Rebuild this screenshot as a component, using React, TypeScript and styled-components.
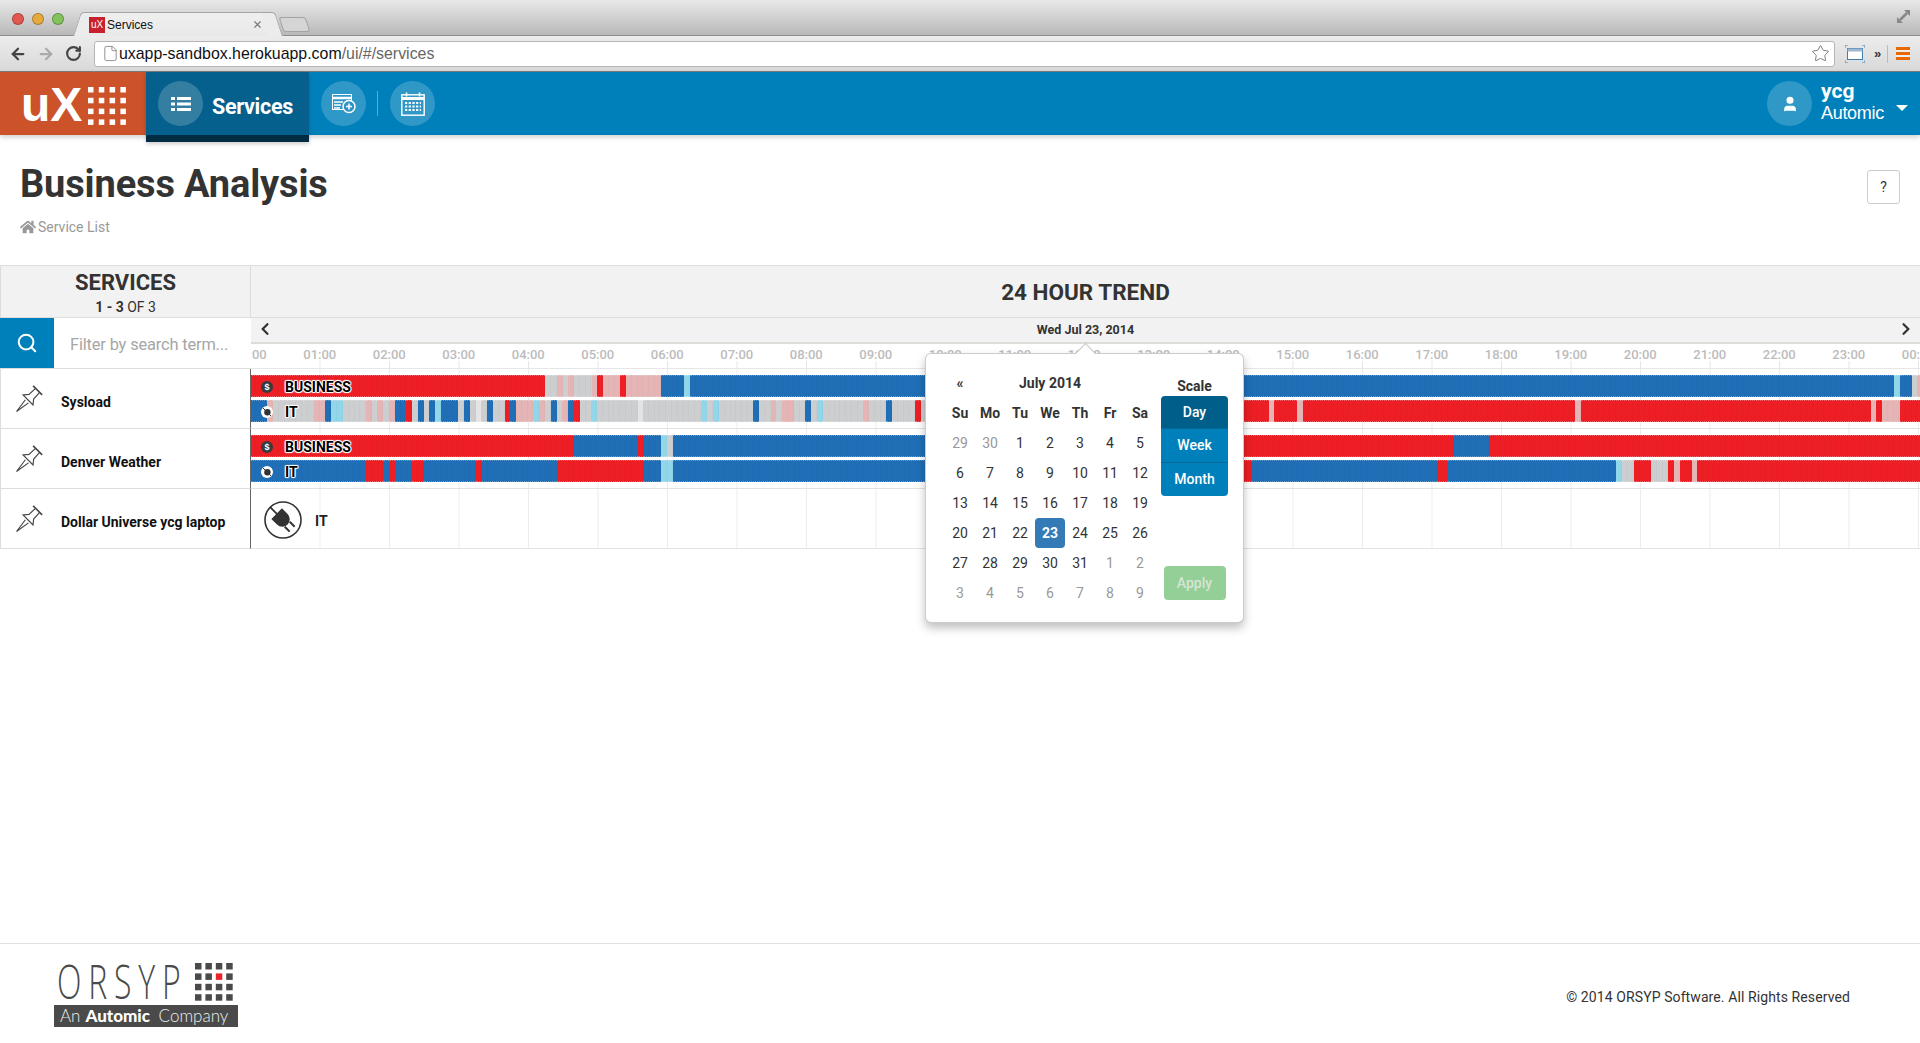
import React from 'react';
import styled, { createGlobalStyle } from 'styled-components';
import { ArrowLeft, ArrowRight, RotateCw, File as FileIcon, Star, Search, X, User } from 'lucide-react';
import { FaChevronLeft, FaChevronRight, FaHome } from 'react-icons/fa';

const Global = createGlobalStyle`
  html, body { margin: 0; padding: 0; height: 100%; overflow: hidden; background: #fff; }
  body { font-family: Roboto, "Liberation Sans", sans-serif; color: #333; }
  * { box-sizing: border-box; }
`;

const Page = styled.div`
  height: 1043px;
  display: flex;
  flex-direction: column;
  overflow: hidden;
`;

/* ---------- browser chrome ---------- */
const TitleBar = styled.div`
  height: 36px;
  flex: none;
  display: flex;
  align-items: flex-end;
  padding-left: 12px;
  background: linear-gradient(#e8e8e8, #b9b9b9);
  border-bottom: 1px solid #8e8e8e;
`;
const Lights = styled.div`
  display: flex;
  gap: 8px;
  align-self: flex-start;
  margin-top: 13px;
  margin-right: 12px;
`;
const Light = styled.span<{ $c: string }>`
  width: 12px;
  height: 12px;
  border-radius: 50%;
  background: ${p => p.$c};
  border: 1px solid rgba(0, 0, 0, 0.25);
`;
const Tab = styled.div`
  position: relative;
  width: 188px;
  height: 24px;
  margin-bottom: -1px;
  margin-left: 8px;
  padding: 0 9px 0 5px;
  display: flex;
  align-items: center;
  background: linear-gradient(#efefef, #e9e9e9);
  border-top: 1px solid #a5a5a5;
  font: 12px "Liberation Sans", sans-serif;
  color: #111;
  &::before, &::after {
    content: '';
    position: absolute;
    top: -1px;
    bottom: 0;
    width: 14px;
    background: #ececec;
    border-top: 1px solid #a5a5a5;
  }
  &::before { left: -7px; transform: skewX(-18deg); border-left: 1px solid #a5a5a5; border-top-left-radius: 4px; }
  &::after { right: -7px; transform: skewX(18deg); border-right: 1px solid #a5a5a5; border-top-right-radius: 4px; }
`;
const Favicon = styled.span`
  position: relative;
  z-index: 1;
  width: 16px;
  height: 16px;
  margin-right: 2px;
  background: #c8202d;
  color: #fff;
  font: 10px/16px "Liberation Sans", sans-serif;
  text-align: center;
`;
const TabTitle = styled.span`
  flex: 1;
  position: relative;
  z-index: 1;
`;
const TabClose = styled.span`
  position: relative;
  z-index: 1;
  display: flex;
  color: #777;
`;
const NewTab = styled.div`
  width: 27px;
  height: 15px;
  margin: 0 0 3px 9px;
  background: #d5d5d5;
  border: 1px solid #a3a3a3;
  border-radius: 3px;
  transform: skewX(18deg);
`;
const Expand = styled.svg`
  margin-left: auto;
  margin-right: 9px;
  align-self: flex-start;
  margin-top: 9px;
`;
const Toolbar = styled.div`
  height: 36px;
  flex: none;
  display: flex;
  align-items: center;
  padding-left: 9px;
  background: linear-gradient(#ececec, #d9d9d9);
  border-bottom: 1px solid #7d7d7d;
`;
const ToolIcon = styled.span<{ $c: string; $w: number }>`
  display: flex;
  width: ${p => p.$w}px;
  color: ${p => p.$c};
`;
const UrlBar = styled.div`
  width: 1741px;
  height: 26px;
  margin-left: 3px;
  padding: 0 4px 0 7px;
  display: flex;
  align-items: center;
  background: #fff;
  border: 1px solid #b5b5b5;
  border-radius: 3px;
  font: 15.9px "Liberation Sans", sans-serif;
  color: #111;
`;
const UrlPath = styled.span`
  color: #666;
`;
const UrlText = styled.span`
  margin-left: 0;
  flex: 1;
`;
const ToolRight = styled.div`
  display: flex;
  align-items: center;
  margin-left: 10px;
`;
const More = styled.span`
  margin-left: 9px;
  font: bold 13px "Liberation Sans", sans-serif;
  color: #333;
  border-right: 1px solid #bbb;
  line-height: 18px;
  padding-right: 6px;
`;
const Burger = styled.span`
  margin-left: 8px;
  width: 14px;
  height: 13px;
  background: repeating-linear-gradient(#e66a00 0 3px, #eee 3px 5px);
`;

/* ---------- app nav ---------- */
const Nav = styled.header`
  height: 63px;
  flex: none;
  display: flex;
  align-items: flex-start;
  background: #0080bb;
  box-shadow: 0 2px 5px rgba(0, 0, 0, 0.2);
  position: relative;
  z-index: 2;
`;
const Logo = styled.div`
  width: 146px;
  height: 63px;
  padding: 8px 0 0 21px;
  display: flex;
  gap: 6px;
  background: #cc5229;
  color: #fff;
  font: bold 48px/50px "Liberation Sans", sans-serif;
`;
const LogoDots = styled.span`
  margin-top: 7px;
  display: block;
`;
const ActiveTab = styled.div`
  width: 163px;
  height: 70px;
  padding: 9px 0 0 12px;
  display: flex;
  gap: 9px;
  background: #05608d;
  border-bottom: 7px solid #022c42;
  box-shadow: 0 2px 4px rgba(0, 0, 0, 0.2);
  color: #fff;
  font-size: 21.5px;
`;
const ActiveLabel = styled.span`
  line-height: 51px;
  font-weight: 700;
  letter-spacing: -0.3px;
`;
const Disc = styled.span`
  width: 45px;
  height: 45px;
  flex: none;
  display: flex;
  align-items: center;
  justify-content: center;
  border-radius: 50%;
  background: rgba(255, 255, 255, 0.19);
  color: #fff;
`;
const NavIcons = styled.div`
  display: flex;
  align-items: center;
  height: 45px;
  margin: 9px 0 0 12px;
`;
const NavDivider = styled.span`
  width: 1px;
  height: 25px;
  margin: 0 12px 0 11px;
  background: rgba(255, 255, 255, 0.35);
`;
const NavUser = styled.div`
  margin-left: auto;
  margin-top: 9px;
  display: flex;
  color: #fff;
`;
const UserText = styled.div`
  margin-left: 9px;
  width: 75px;
`;
const UserName = styled.div`
  font: 700 21px/24px Roboto, sans-serif;
  margin-top: -2px;
`;
const UserOrg = styled.div`
  font: 400 18px/20px "Liberation Sans", sans-serif;
  letter-spacing: -0.3px;
`;
const Caret = styled.span`
  width: 0;
  height: 0;
  margin: 24px 12px 0 0;
  border-style: solid;
  border-width: 6px 6px 0;
  border-color: #fff transparent transparent;
`;

/* ---------- page header ---------- */
const PageHead = styled.section`
  height: 130px;
  flex: none;
  padding: 25px 20px 0;
  display: flex;
  justify-content: space-between;
  align-items: flex-start;
`;
const Title = styled.h1`
  margin: 0;
  font: 700 38px/48px Roboto, sans-serif;
  color: #333;
  letter-spacing: -0.15px;
`;
const Crumb = styled.div`
  margin-top: 10px;
  display: flex;
  align-items: center;
  gap: 2px;
  font-size: 14px;
  line-height: 18px;
  color: #999;
`;
const HelpBtn = styled.button`
  width: 33px;
  height: 34px;
  margin-top: 10px;
  background: #fff;
  border: 1px solid #ccc;
  border-radius: 3px;
  font: 14px Roboto, sans-serif;
  color: #333;
  padding: 0;
`;

/* ---------- table ---------- */
const Table = styled.section`
  display: flex;
  flex: none;
  border-top: 1px solid #ddd;
`;
const Side = styled.div`
  width: 251px;
  flex: none;
`;
const SideHead = styled.div`
  height: 52px;
  padding-top: 4px;
  text-align: center;
  background: #f2f2f2;
  border-left: 1px solid #ddd;
  border-right: 1px solid #ddd;
  border-bottom: 1px solid #ddd;
`;
const SideTitle = styled.div`
  font: 700 22px/26px Roboto, sans-serif;
  color: #333;
`;
const SideCount = styled.div`
  font: 400 14px/18px Roboto, sans-serif;
  color: #333;
  margin-top: 2px;
  b { font-weight: 700; }
`;
const SearchRow = styled.div`
  height: 51px;
  display: flex;
  border-bottom: 1px solid #ddd;
`;
const SearchBtn = styled.span`
  width: 54px;
  display: flex;
  align-items: center;
  justify-content: center;
  background: #0080bb;
  color: #fff;
`;
const SearchInput = styled.div`
  flex: 1;
  padding-left: 16px;
  font-size: 16.4px;
  line-height: 54px;
  color: #a6a6a6;
  letter-spacing: -0.15px;
`;
const SvcRow = styled.div`
  height: 60px;
  padding-left: 15px;
  display: flex;
  align-items: center;
  gap: 18px;
  border-left: 1px solid #ddd;
  border-right: 1px solid #666;
  border-bottom: 1px solid #ddd;
  font: 700 14px Roboto, sans-serif;
  color: #111;
`;
const SvcName = styled.span`
  margin-top: 6px;
`;
const PinIcon = styled.svg`
  flex: none;
`;
const Main = styled.div`
  position: relative;
  width: 1669px;
  flex: none;
`;
const TrendClip = styled.div`
  overflow: hidden;
`;
const TrendTitle = styled.div`
  height: 52px;
  background: #f2f2f2;
  border-bottom: 1px solid #ddd;
  text-align: center;
  font: 700 22.5px/53px Roboto, sans-serif;
  color: #333;
`;
const DateNav = styled.div`
  height: 26px;
  padding: 0 7px;
  display: flex;
  align-items: center;
  justify-content: space-between;
  background: #f2f2f2;
  border-bottom: 2px solid #dcdcd8;
  font: 700 12.5px/24px Roboto, sans-serif;
  color: #333;
  svg { display: block; color: #333; margin-top: -2px; }
`;
const Axis = styled.div`
  height: 25px;
  display: flex;
  padding-top: 2px;
  border-bottom: 1px solid #e6e6e6;
  background-image: linear-gradient(90deg, #e6e6e6 1px, transparent 1px);
  background-size: 69.5px 7px;
  background-position: -1px 100%;
  background-repeat: repeat-x;
  overflow: hidden;
`;
const Hour = styled.span`
  width: 69.5px;
  flex: none;
  text-align: center;
  font: 500 13px/18px Roboto, sans-serif;
  color: #bcbcbc;
  &:first-child { margin-left: -35.5px; }
`;
const Lane = styled.div`
  height: 60px;
  padding-top: 6px;
  border-bottom: 1px solid #e2e2e2;
  background-image: linear-gradient(90deg, #ececec 1px, transparent 1px);
  background-size: 69.5px 100%;
  background-position: -1px 0;
`;
const Bar = styled.div`
  position: relative;
  width: 1680px;
  height: 22px;
  margin: 0 0 3px -1px;
  display: flex;
`;
const toneColor: Record<string, string> = {
  r: '#ed1f24',
  b: '#206fb6',
  g: '#cdced0',
  p: '#e5b5b5',
  l: '#92d6ea',
  w: '#e4e4e4',
};
const Segment = styled.span<{ $tone: string }>`
  flex: none;
  height: 100%;
  background-color: ${p => toneColor[p.$tone]};
  background-image: repeating-linear-gradient(90deg, transparent 0 4.8px, rgba(0, 0, 0, 0.025) 4.8px 5.79px);
  border-top: 1px dotted rgba(255, 255, 255, 0.3);
  border-bottom: 1px dotted rgba(255, 255, 255, 0.3);
`;
const BarTag = styled.span`
  position: absolute;
  left: 11px;
  top: 1px;
  height: 22px;
  display: flex;
  align-items: center;
  gap: 12px;
  font: 700 14px Roboto, sans-serif;
  color: #000;
  text-shadow: 1px 0 0 #fff, -1px 0 0 #fff, 0 1px 0 #fff, 0 -1px 0 #fff, 1px 1px 1px rgba(255,255,255,.7), -1px -1px 1px rgba(255,255,255,.7), 1px -1px 1px rgba(255,255,255,.7), -1px 1px 1px rgba(255,255,255,.7);
`;
const TagCoin = styled.span`
  width: 12px;
  height: 12px;
  flex: none;
  margin-top: -1px;
  border-radius: 50%;
  background: #3a3a3a;
  color: #fff;
  font: 700 9px/12px "Liberation Sans", sans-serif;
  text-align: center;
  text-shadow: none;
`;
const MiniPlugSvg = styled.svg`
  flex: none;
  margin-top: -1px;
`;
const OutageCell = styled.div`
  height: 60px;
  margin-top: -5px;
  padding-left: 13px;
  display: flex;
  align-items: center;
  gap: 13px;
  font: 700 14px Roboto, sans-serif;
  color: #222;
`;
const OutageLabel = styled.span`
  margin-top: 2px;
`;

/* ---------- date popup ---------- */
const Popup = styled.div`
  position: absolute;
  left: 674px;
  top: 87px;
  width: 319px;
  height: 270px;
  padding: 14px 0 0 19px;
  display: flex;
  gap: 6px;
  background: #fff;
  border: 1px solid rgba(0, 0, 0, 0.2);
  border-radius: 6px;
  box-shadow: 0 5px 10px rgba(0, 0, 0, 0.25);
  z-index: 3;
  &::before {
    content: '';
    position: absolute;
    left: 152px;
    top: -8px;
    width: 14px;
    height: 14px;
    background: #fff;
    border-left: 1px solid rgba(0, 0, 0, 0.25);
    border-top: 1px solid rgba(0, 0, 0, 0.25);
    transform: rotate(45deg);
  }
`;
const Calendar = styled.div`
  width: 210px;
  display: grid;
  grid-template-columns: repeat(7, 30px);
  grid-auto-rows: 30px;
  font: 400 14px Roboto, sans-serif;
`;
const CalCell = styled.span<{ $muted?: boolean; $head?: boolean; $sel?: boolean }>`
  display: flex;
  align-items: center;
  justify-content: center;
  border-radius: 4px;
  font-weight: ${p => (p.$head || p.$sel ? 700 : 400)};
  color: ${p => (p.$sel ? '#fff' : p.$muted ? '#999' : '#333')};
  background: ${p => (p.$sel ? '#337ab7' : 'transparent')};
`;
const CalMonth = styled(CalCell)`
  grid-column: span 5;
  font-weight: 700;
`;
const Scale = styled.div`
  width: 67px;
  display: flex;
  flex-direction: column;
  align-items: center;
`;
const ScaleTitle = styled.div`
  height: 28px;
  font: 700 14px/36px Roboto, sans-serif;
  color: #333;
`;
const ScaleBtn = styled.div<{ $on?: boolean }>`
  width: 67px;
  height: 33.4px;
  background: ${p => (p.$on ? '#005f8a' : '#0080bb')};
  border-bottom: 1px solid #056a97;
  color: #fff;
  font: 500 14px/33px Roboto, sans-serif;
  text-align: center;
  &:first-of-type { border-radius: 4px 4px 0 0; }
  &:last-of-type { border-radius: 0 0 4px 4px; border-bottom: none; }
`;
const ScaleGroup = styled.div`
  margin-top: 0;
`;
const Apply = styled.div`
  width: 62px;
  height: 34px;
  margin-top: 70px;
  background: #94cf97;
  border-radius: 4px;
  color: #d6e4d4;
  font: 500 14px/34px Roboto, sans-serif;
  text-align: center;
`;

/* ---------- footer ---------- */
const Footer = styled.footer`
  margin-top: auto;
  height: 100px;
  flex: none;
  border-top: 1px solid #e0e0e0;
  display: flex;
  justify-content: space-between;
  align-items: center;
  padding: 0 70px 0 54px;
`;
const Brand = styled.div`
  width: 184px;
  margin-top: 3px;
`;
const BrandTop = styled.div`
  display: flex;
  justify-content: space-between;
  padding: 0 5px 0 3px;
  height: 36px;
`;
const BrandWord = styled.span`
  font: 300 47px/36px "Open Sans", sans-serif;
  color: #4a4a4a;
  letter-spacing: 10px;
  transform: scaleX(0.68);
  transform-origin: left center;
  white-space: nowrap;
  width: 125px;
`;
const BrandBar = styled.div`
  height: 22px;
  margin-top: 6px;
  padding: 0 6px;
  background: #4a4a4a;
  color: #eee;
  font: 300 17px/22px Lato, sans-serif;
  white-space: nowrap;
  b { font-weight: 900; font-size: 17px; margin: 0 4px 0 5px; color: #fff; }
`;
const Copy = styled.div`
  margin-top: 6px;
  font: 400 14px Roboto, sans-serif;
  letter-spacing: 0.1px;
  color: #333;
`;

/* ---------- data ---------- */
const CELL = 5.79;
const parseRuns = (s: string) => {
  let prev = 0;
  return s.split(' ').map(tok => {
    const end = Number(tok.slice(1));
    const r = { tone: tok[0], cells: end - prev };
    prev = end;
    return r;
  });
};
const Strip = ({ data, children }: { data: string; children: React.ReactNode }) => (
  <Bar>
    {parseRuns(data).map((r, i) => (
      <Segment key={i} $tone={r.tone} style={{ width: r.cells * CELL }} />
    ))}
    {children}
  </Bar>
);

const MiniPlug = () => (
  <MiniPlugSvg width="12" height="12" viewBox="0 0 12 12">
    <circle cx="6" cy="6" r="6" fill="#fff" />
    <circle cx="6.4" cy="6.2" r="3.2" fill="#333" />
    <path d="M2 2l3 3M7.5 7.5l2.5 2.5" stroke="#333" strokeWidth="1" />
  </MiniPlugSvg>
);

const Tag = ({ kind }: { kind: 'biz' | 'it' }) => (
  <BarTag>
    {kind === 'biz' ? <TagCoin>$</TagCoin> : <MiniPlug />}
    {kind === 'biz' ? 'BUSINESS' : 'IT'}
  </BarTag>
);

const rows = [
  {
    biz: 'r51 g53 p54 g55 p56 g59 p60 r61 p64 r65 p71 b75 l76 b284 l285 b287 g288 p289 b290',
    it: 'b3 p4 g11 p13 b14 l16 g20 p21 g22 p23 g24 p25 b27 r28 g29 b30 g31 b32 l33 b36 g37 b38 g39 w40 g41 b42 g44 r45 b46 p49 l50 p51 g52 b53 g54 p55 b56 r57 g59 l60 g67 w68 g78 l79 g80 l81 g87 b88 g90 p91 g92 p94 g96 b97 g98 l99 g106 p107 g110 b111 g115 r116 g117 r176 p177 r181 p182 r229 p230 r280 p281 r282 p285 r290',
  },
  {
    biz: 'r56 b67 r68 b71 l72 g73 b160 r208 b214 r290',
    it: 'b20 r23 b24 r25 b28 r30 b39 r40 b53 r68 b71 l73 b160 r173 b205 r207 b236 l237 g239 r242 g245 r246 p247 r249 p250 r290',
  },
];

const hours = Array.from({ length: 25 }, (_, i) => `${String(i % 24).padStart(2, '0')}:00`);
const weekdays = ['Su', 'Mo', 'Tu', 'We', 'Th', 'Fr', 'Sa'];
const days: [number, boolean][] = [
  ...[29, 30].map(d => [d, true] as [number, boolean]),
  ...Array.from({ length: 31 }, (_, i) => [i + 1, false] as [number, boolean]),
  ...Array.from({ length: 9 }, (_, i) => [i + 1, true] as [number, boolean]),
];

const DotGrid = ({ size, step, sq, fill, accent }: { size: number; step: number; sq: number; fill: string; accent?: boolean }) => (
  <svg width={size} height={size} style={{ flex: 'none', display: 'block' }}>
    {Array.from({ length: 16 }, (_, i) => (
      <rect
        key={i}
        x={(i % 4) * step}
        y={Math.floor(i / 4) * step}
        width={sq}
        height={sq}
        fill={accent && i === 6 ? '#e8252b' : fill}
      />
    ))}
  </svg>
);

const PlugIcon = () => (
  <svg width="38" height="38" viewBox="0 0 38 38">
    <circle cx="19" cy="19" r="18" fill="#fff" stroke="#333" strokeWidth="1.6" />
    <g transform="rotate(45 19 19)">
      <path d="M10 11.5h8a7.5 7.5 0 0 1 0 15h-8z" fill="#333" />
      <path d="M0.5 19H11" stroke="#333" strokeWidth="1.8" />
      <path d="M25 15.5h7M25 22.5h7" stroke="#333" strokeWidth="2" />
    </g>
  </svg>
);

const ThumbTack = () => (
  <PinIcon width="27" height="27" viewBox="0 0 26 26" fill="none" stroke="#444" strokeWidth="1.1">
    <path d="M16.5 0.8L25.2 9.5" strokeWidth="1.5" />
    <path d="M18.8 3.2L12.5 9L6.8 9.6L16.4 19.2L17 13.5L22.8 7.2" />
    <path d="M9 14.2L0.5 25.5L12 17.2" />
  </PinIcon>
);

export default function App() {
  return (
    <Page>
      <Global />
      <TitleBar>
        <Lights>
          <Light $c="#e2574f" />
          <Light $c="#e6a93c" />
          <Light $c="#83c35b" />
        </Lights>
        <Tab>
          <Favicon>uX</Favicon>
          <TabTitle>Services</TabTitle>
          <TabClose>
            <X size={11} strokeWidth={2.5} />
          </TabClose>
        </Tab>
        <NewTab />
        <Expand width="15" height="15" viewBox="0 0 15 15">
          <path d="M8 1H14v6zM1 8V14h6z" fill="#888" />
          <path d="M4 11l7-7" stroke="#888" strokeWidth="2.5" />
        </Expand>
      </TitleBar>
      <Toolbar>
        <ToolIcon $c="#444" $w={28}><ArrowLeft size={18} strokeWidth={3} /></ToolIcon>
        <ToolIcon $c="#aaa" $w={28}><ArrowRight size={18} strokeWidth={3} /></ToolIcon>
        <ToolIcon $c="#444" $w={26}><RotateCw size={17} strokeWidth={3} /></ToolIcon>
        <UrlBar>
          <FileIcon size={17} color="#888" strokeWidth={1.3} />
          <UrlText>
            uxapp-sandbox.herokuapp.com<UrlPath>/ui/#/services</UrlPath>
          </UrlText>
          <Star size={19} color="#777" strokeWidth={1.2} />
        </UrlBar>
        <ToolRight>
          <svg width="20" height="18" viewBox="0 0 20 18">
            <path d="M0 3V0h3M17 0h3v3M20 15v3h-3M3 18H0v-3" fill="none" stroke="#4b86b5" strokeWidth="1" />
            <rect x="2.5" y="3.5" width="15" height="11" fill="#fff" stroke="#3e7db0" />
            <rect x="2.5" y="3.5" width="15" height="3" fill="#9db8cf" />
          </svg>
          <More>»</More>
          <Burger />
        </ToolRight>
      </Toolbar>

      <Nav>
        <Logo>
          uX
          <LogoDots>
            <DotGrid size={38} step={10.8} sq={5.5} fill="#fff" />
          </LogoDots>
        </Logo>
        <ActiveTab>
          <Disc>
            <svg width="20" height="16" viewBox="0 0 20 16" fill="#fff">
              <rect x="0" y="1" width="4" height="3" /><rect x="6" y="1" width="14" height="3" />
              <rect x="0" y="6.5" width="4" height="3" /><rect x="6" y="6.5" width="14" height="3" />
              <rect x="0" y="12" width="4" height="3" /><rect x="6" y="12" width="14" height="3" />
            </svg>
          </Disc>
          <ActiveLabel>Services</ActiveLabel>
        </ActiveTab>
        <NavIcons>
          <Disc>
            <svg width="24" height="20" viewBox="0 0 24 20" fill="none" stroke="#fff">
              <rect x="0.5" y="0.5" width="19" height="15" strokeWidth="1" />
              <path d="M0 4h20" strokeWidth="2.5" />
              <path d="M2 8h9M2 11h7M2 14h6" strokeWidth="1.4" />
              <circle cx="17" cy="12.5" r="6" fill="#2f93c5" strokeWidth="1.5" />
              <path d="M14 12.5h6M17 9.5v6" strokeWidth="1.6" />
            </svg>
          </Disc>
          <NavDivider />
          <Disc>
            <svg width="24" height="24" viewBox="0 0 24 24" fill="none" stroke="#fff">
              <rect x="0.8" y="2.8" width="22.4" height="20.4" strokeWidth="1.4" />
              <path d="M1 6.5h22" strokeWidth="3" />
              <path d="M5.5 0.5v4M18.5 0.5v4" strokeWidth="1.6" />
              <path d="M4 11h16M4 14.5h16M4 18h16" strokeWidth="2" strokeDasharray="2.2 1.5" />
            </svg>
          </Disc>
        </NavIcons>
        <NavUser>
          <Disc>
            <User size={18} fill="#fff" strokeWidth={1.5} />
          </Disc>
          <UserText>
            <UserName>ycg</UserName>
            <UserOrg>Automic</UserOrg>
          </UserText>
          <Caret />
        </NavUser>
      </Nav>

      <PageHead>
        <div>
          <Title>Business Analysis</Title>
          <Crumb>
            <FaHome size={16} color="#999" />
            Service List
          </Crumb>
        </div>
        <HelpBtn>?</HelpBtn>
      </PageHead>

      <Table>
        <Side>
          <SideHead>
            <SideTitle>SERVICES</SideTitle>
            <SideCount>
              <b>1 - 3</b> OF 3
            </SideCount>
          </SideHead>
          <SearchRow>
            <SearchBtn>
              <Search size={22} strokeWidth={2.2} />
            </SearchBtn>
            <SearchInput>Filter by search term...</SearchInput>
          </SearchRow>
          {['Sysload', 'Denver Weather', 'Dollar Universe ycg laptop'].map(n => (
            <SvcRow key={n}>
              <ThumbTack />
              <SvcName>{n}</SvcName>
            </SvcRow>
          ))}
        </Side>
        <Main>
          <TrendClip>
            <TrendTitle>24 HOUR TREND</TrendTitle>
            <DateNav>
              <FaChevronLeft size={14} />
              <span>Wed Jul 23, 2014</span>
              <FaChevronRight size={14} />
            </DateNav>
            <Axis>
              {hours.map((h, i) => (
                <Hour key={i}>{h}</Hour>
              ))}
            </Axis>
            {rows.map((r, i) => (
              <Lane key={i}>
                <Strip data={r.biz}><Tag kind="biz" /></Strip>
                <Strip data={r.it}><Tag kind="it" /></Strip>
              </Lane>
            ))}
            <Lane>
              <OutageCell>
                <PlugIcon />
                <OutageLabel>IT</OutageLabel>
              </OutageCell>
            </Lane>
          </TrendClip>
          <Popup>
            <Calendar>
              <CalCell $head>«</CalCell>
              <CalMonth>July 2014</CalMonth>
              <span />
              {weekdays.map(d => (
                <CalCell key={d} $head>{d}</CalCell>
              ))}
              {days.map(([d, muted], i) => (
                <CalCell key={i} $muted={muted} $sel={!muted && d === 23}>{d}</CalCell>
              ))}
            </Calendar>
            <Scale>
              <ScaleTitle>Scale</ScaleTitle>
              <ScaleGroup>
                <ScaleBtn $on>Day</ScaleBtn>
                <ScaleBtn>Week</ScaleBtn>
                <ScaleBtn>Month</ScaleBtn>
              </ScaleGroup>
              <Apply>Apply</Apply>
            </Scale>
          </Popup>
        </Main>
      </Table>

      <Footer>
        <Brand>
          <BrandTop>
            <BrandWord>ORSYP</BrandWord>
            <DotGrid size={38} step={10.4} sq={6.5} fill="#4a4a4a" accent />
          </BrandTop>
          <BrandBar>An<b>Automic</b> Company</BrandBar>
        </Brand>
        <Copy>© 2014 ORSYP Software. All Rights Reserved</Copy>
      </Footer>
    </Page>
  );
}
